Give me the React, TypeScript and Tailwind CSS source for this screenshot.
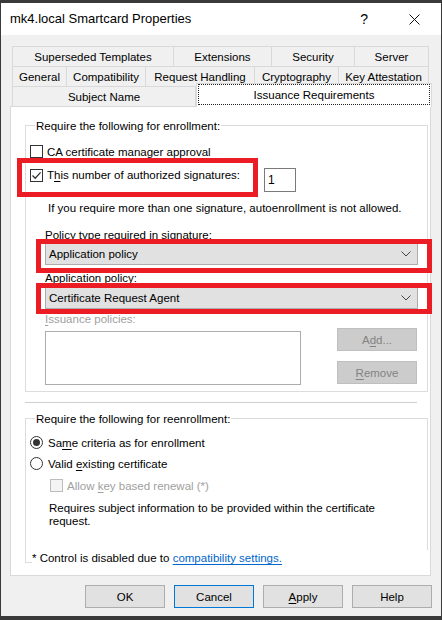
import React from "react";

const U = ({ children }: { children: React.ReactNode }) => (
  <span className="underline underline-offset-[2px] decoration-[1px]">{children}</span>
);

function Checkbox({ checked, disabled }: { checked?: boolean; disabled?: boolean }) {
  return (
    <div
      className={
        disabled
          ? "w-[13px] h-[13px] border border-[#bcbcbc] bg-[#f4f4f4] shrink-0"
          : "w-[13px] h-[13px] border border-[#333333] bg-white flex items-center justify-center shrink-0"
      }
    >
      {checked && (
        <svg width="11" height="11" viewBox="0 0 11 11">
          <path d="M1.5 5.5 L4.2 8.3 L9.6 2.4" fill="none" stroke="#333333" strokeWidth="1.3" />
        </svg>
      )}
    </div>
  );
}

function Radio({ checked }: { checked?: boolean }) {
  return (
    <div className="w-[13px] h-[13px] rounded-full border border-[#333333] bg-white flex items-center justify-center shrink-0">
      {checked && <div className="w-[7px] h-[7px] rounded-full bg-[#333333]" />}
    </div>
  );
}

function Chevron() {
  return (
    <svg width="10" height="6" viewBox="0 0 10 6">
      <path d="M0.5 0.5 L5 5 L9.5 0.5" fill="none" stroke="#444444" strokeWidth="1" />
    </svg>
  );
}

function Dropdown({ text }: { text: string }) {
  return (
    <div className="ml-[15px] w-[373px] h-[22px] bg-[#e1e1e1] border border-[#adadad] flex items-center justify-between pl-[3px] pr-[6px]">
      <span>{text}</span>
      <Chevron />
    </div>
  );
}

export default function App() {
  return (
    <div className="relative w-[442px] h-[620px] bg-[#3a3a3a] pt-[3px] px-[1px] pb-[4px] flex flex-col font-['Liberation_Sans',Arial,sans-serif] text-[11.5px] leading-[14px] text-black">
      <div className="flex-1 bg-[#f0f0f0] flex flex-col">
        {/* Title bar */}
        <div className="h-[32px] bg-white flex items-center pl-[9px] shrink-0">
          <span className="text-[13px] leading-[16px]">mk4.local Smartcard Properties</span>
          <span className="ml-auto text-[14px] leading-[16px] mr-[41px]">?</span>
          <svg width="11" height="11" viewBox="0 0 11 11" className="mr-[21px]">
            <path d="M0.5 0.5 L10.5 10.5 M10.5 0.5 L0.5 10.5" stroke="#111111" strokeWidth="1" />
          </svg>
        </div>

        {/* Body */}
        <div className="px-[9px] pt-[11px] flex flex-col">
          {/* Tabs */}
          <div className="ml-[2px] flex flex-col">
            <div className="flex h-[20px]">
              <div className="w-[161px] border-l border-t border-[#d9d9d9] flex items-center justify-center">Superseded Templates</div>
              <div className="w-[98px] border-l border-t border-[#d9d9d9] flex items-center justify-center">Extensions</div>
              <div className="w-[83px] border-l border-t border-[#d9d9d9] flex items-center justify-center">Security</div>
              <div className="w-[75px] border-l border-t border-r border-[#d9d9d9] flex items-center justify-center">Server</div>
            </div>
            <div className="flex h-[20px]">
              <div className="w-[54px] border-l border-t border-[#d9d9d9] flex items-center justify-center">General</div>
              <div className="w-[79px] border-l border-t border-[#d9d9d9] flex items-center justify-center">Compatibility</div>
              <div className="w-[109px] border-l border-t border-[#d9d9d9] flex items-center justify-center">Request Handling</div>
              <div className="w-[84px] border-l border-t border-[#d9d9d9] flex items-center justify-center">Cryptography</div>
              <div className="w-[91px] border-l border-t border-r border-[#d9d9d9] flex items-center justify-center">Key Attestation</div>
            </div>
            <div className="flex h-[20px] items-end">
              <div className="w-[184px] h-[20px] border-l border-t border-r border-[#d9d9d9] flex items-center justify-center">Subject Name</div>
              <div className="relative z-10 w-[236px] h-[24px] -mb-[1px] ml-[0px] bg-white border-l border-t border-r border-[#d9d9d9] flex items-center justify-center pb-[2px]">
                <div className="absolute left-[1px] right-[1px] top-[0px] bottom-[2px] border border-dotted border-[#222222]" />
                <span>Issuance Requirements</span>
              </div>
            </div>
          </div>

          {/* Panel */}
          <div className="w-[421px] h-[470px] -ml-[0px] border border-[#d9d9d9] bg-white pl-[14px] pt-[18px] flex flex-col">
            {/* Group 1 */}
            <div className="relative w-[403px] border border-[#dcdcdc] flex flex-col pb-[6px]">
              <div className="absolute left-[9px] top-[-7px] px-[1px] bg-white">Require the following for enrollment:</div>

              <div className="mt-[19px] pl-[4px] h-[13px] flex items-center gap-[4px]">
                <Checkbox />
                <span><U>C</U>A certificate manager approval</span>
              </div>

              <div className="mt-[10px] pl-[4px] h-[24px] flex items-start">
                <div className="w-[234px] h-[14px] flex items-center gap-[4px]">
                  <Checkbox checked />
                  <span>T<U>h</U>is number of authorized signatures:</span>
                </div>
                <div className="w-[32px] h-[24px] border border-[#7a7a7a] bg-white flex items-center pl-[3px] text-[12px]">1</div>
              </div>

              <div className="mt-[9px] pl-[22px]">If you require more than one signature, autoenrollment is not allowed.</div>

              <div className="mt-[13px] pl-[19px]">Policy type required in signature:</div>
              <div className="mt-[1px] pl-[4px]">
                <Dropdown text="Application policy" />
              </div>

              <div className="mt-[6px] pl-[19px]">Application policy:</div>
              <div className="mt-[2px] pl-[4px]">
                <Dropdown text="Certificate Request Agent" />
              </div>

              <div className="mt-[3px] pl-[19px] text-[#a0a0a0]"><U>I</U>ssuance policies:</div>

              <div className="mt-[2px] pl-[4px] flex items-start">
                <div className="ml-[15px] mt-[3px] w-[256px] h-[54px] border border-[#adadad] bg-white" />
                <div className="ml-[36px] flex flex-col gap-[10px]">
                  <div className="w-[80px] h-[23px] bg-[#cccccc] border border-[#bfbfbf] text-[#838383] flex items-center justify-center">A<U>d</U>d...</div>
                  <div className="w-[80px] h-[23px] bg-[#cccccc] border border-[#bfbfbf] text-[#838383] flex items-center justify-center"><U>R</U>emove</div>
                </div>
              </div>
            </div>

            {/* Separator */}
            <div className="mt-[10px] w-[392px] h-px bg-[#cfcfcf]" />

            {/* Group 2 */}
            <div className="relative mt-[15px] w-[403px] border border-[#dcdcdc] flex flex-col">
              <div className="absolute left-[9px] top-[-7px] px-[1px] bg-white">Require the following for reenrollment:</div>

              <div className="mt-[17px] pl-[4px] h-[13px] flex items-center gap-[5px]">
                <Radio checked />
                <span>Sa<U>m</U>e criteria as for enrollment</span>
              </div>
              <div className="mt-[8px] pl-[4px] h-[13px] flex items-center gap-[5px]">
                <Radio />
                <span>Valid <U>e</U>xisting certificate</span>
              </div>
              <div className="mt-[9px] pl-[24px] h-[13px] flex items-center gap-[4px]">
                <Checkbox disabled />
                <span className="text-[#a0a0a0]">Allow <U>k</U>ey based renewal (*)</span>
              </div>
              <div className="mt-[10px] pl-[23px] leading-[13px]">
                Requires subject information to be provided within the certificate
                <br />
                request.
              </div>

              <div className="mt-[22px] ml-[6px] -mr-[2px] -mb-[4px] h-[16px] bg-white flex items-center">
                <span>* Control is disabled due to&nbsp;</span>
                <span className="text-[#0066cc] underline underline-offset-[2px]">compatibility settings.</span>
              </div>
            </div>
          </div>

          {/* Buttons */}
          <div className="mt-[9px] flex justify-end gap-[9px]">
            <div className="w-[80px] h-[23px] bg-[#e1e1e1] border border-[#adadad] flex items-center justify-center">OK</div>
            <div className="w-[80px] h-[23px] bg-[#e1e1e1] border border-[#0078d7] flex items-center justify-center">Cancel</div>
            <div className="w-[80px] h-[23px] bg-[#e1e1e1] border border-[#adadad] flex items-center justify-center"><U>A</U>pply</div>
            <div className="w-[80px] h-[23px] bg-[#e1e1e1] border border-[#adadad] flex items-center justify-center">Help</div>
          </div>
        </div>
      </div>

      {/* Red annotation boxes */}
      <div className="absolute left-[17px] top-[158px] w-[241px] h-[39px] border-[5px] border-[#ec1c24] pointer-events-none" />
      <div className="absolute left-[36px] top-[239px] w-[396px] h-[34px] border-[5px] border-[#ec1c24] pointer-events-none" />
      <div className="absolute left-[36px] top-[283px] w-[396px] h-[31px] border-[5px] border-[#ec1c24] pointer-events-none" />
    </div>
  );
}
